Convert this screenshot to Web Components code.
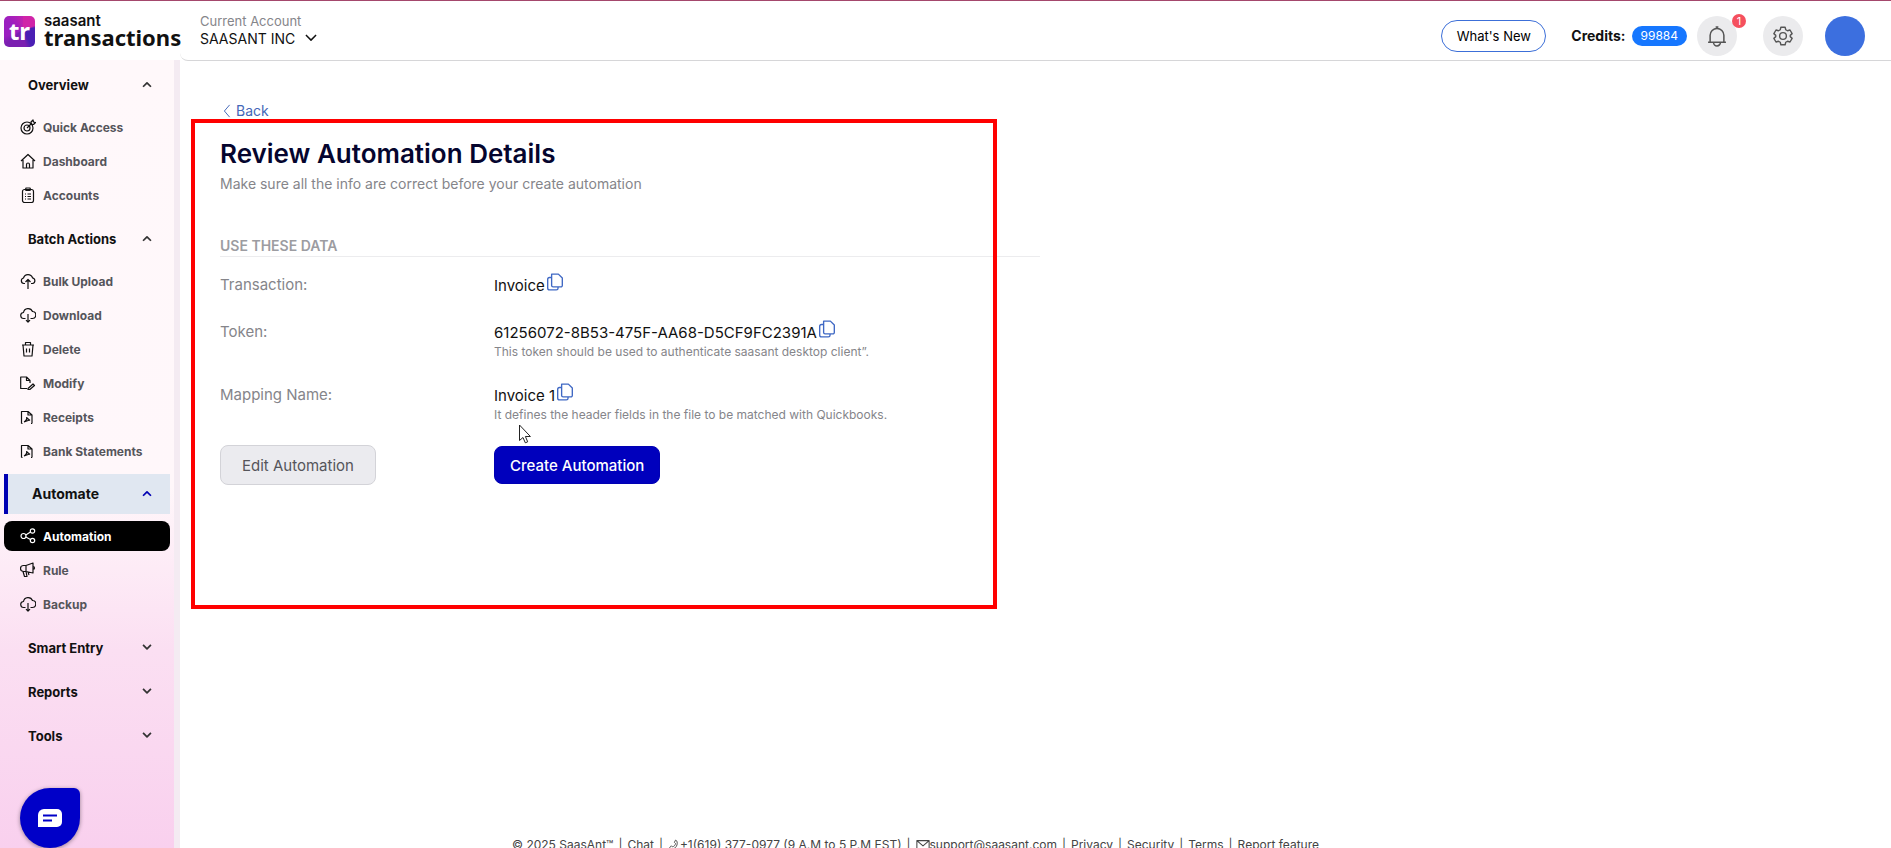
<!DOCTYPE html>
<html lang="en">
<head>
<meta charset="utf-8">
<title>Review Automation Details</title>
<style>
  html, body {
    height: 100%;
  }

  body {
    margin: 0;
    overflow: hidden;
    background: #fff;
    font-family: Inter, "Liberation Sans", Arial, sans-serif;
    color: #111;
  }
</style>
</head>
<body>
<st-app>
  <st-topbar slot="header" account="SAASANT INC" credits="99884" alerts="1"></st-topbar>

  <st-sidebar slot="nav">
    <st-group label="Overview" open>
      <st-link icon="target">Quick Access</st-link>
      <st-link icon="home">Dashboard</st-link>
      <st-link icon="clipboard">Accounts</st-link>
    </st-group>
    <st-group label="Batch Actions" open>
      <st-link icon="cloud-up">Bulk Upload</st-link>
      <st-link icon="cloud-down">Download</st-link>
      <st-link icon="trash">Delete</st-link>
      <st-link icon="modify">Modify</st-link>
      <st-link icon="pdf">Receipts</st-link>
      <st-link icon="pdf">Bank Statements</st-link>
    </st-group>
    <st-group label="Automate" open current>
      <st-link icon="share" active>Automation</st-link>
      <st-link icon="horn">Rule</st-link>
      <st-link icon="cloud-down">Backup</st-link>
    </st-group>
    <st-group label="Smart Entry"></st-group>
    <st-group label="Reports"></st-group>
    <st-group label="Tools"></st-group>
  </st-sidebar>

  <st-review>
    <st-field label="Transaction:" value="Invoice"></st-field>
    <st-field label="Token:" value="61256072-8B53-475F-AA68-D5CF9FC2391A">This token should be used to authenticate saasant desktop client”.</st-field>
    <st-field label="Mapping Name:" value="Invoice 1">It defines the header fields in the file to be matched with Quickbooks.</st-field>
  </st-review>

  <st-footer slot="footer"></st-footer>
</st-app>
<st-chat></st-chat>
<st-pointer></st-pointer>

<script>
// All icons share a 16x16 box and are stroked with the current text colour
const ICONS = {
  target: '<circle cx="7" cy="9" r="6"/><circle cx="7" cy="9" r="3"/><path d="M7 9l5-5M11 5V3l2-2 .5 2 2 .5-2 2h-2"/>',
  home: '<path d="M1 8l7-6.500 7 6.500M3 7v8h10V7M6.500 15v-3.500a1.500 1.500 0 0 1 3 0V15"/>',
  clipboard: '<rect x="2.500" y="2.500" width="11" height="13" rx="2"/><path d="M5.500 2.500l.5-1.500h4l.5 1.500-.5 1H6zM5 7h1M7.500 7H11M5 9.500h1M7.500 9.500H11M5 12h1M7.500 12H11"/>',
  'cloud-up': '<path d="M5 10.500H3.800A2.800 2.800 0 0 1 3.500 5 4.700 4.700 0 0 1 12.500 4.800a2.900 2.900 0 0 1 0 5.700H11M8 16V7M5.500 9L8 6.500 10.500 9"/>',
  'cloud-down': '<path d="M5.500 11.500H4A3 3 0 0 1 3.500 5.500a4.700 4.700 0 0 1 9-1 3.500 3.500 0 0 1-.5 7h-1.500M8 7v8M6 13.200l2 2 2-2"/>',
  trash: '<path d="M2 4h12M3 4l1 11h8l1-11M5.500 4V1.500h5V4M6.500 7.500v4M9.500 7.500v4"/>',
  modify: '<path d="M7 13.500H0.700V2h5.800l3.500 3.500V8M6.500 2v3.500H10M8 13.500l5-4.500 1.500 1.500-4.700 4H8z"/>',
  pdf: '<path d="M1.500 14.500h1M11 14.500h1M1.500 14.500v-12h6.500l4 3.500v8.500M8 2.500V6h4M4 13c2-1 3-3 2.700-5M4 13l5.500-2M7 9l3 2.500"/>',
  share: '<circle cx="3.500" cy="8" r="2.500"/><circle cx="12.500" cy="3" r="2.200"/><circle cx="12.500" cy="12.500" r="2.200"/><path d="M5.800 7l4.700-3M5.800 9l4.700 2.500"/>',
  horn: '<path d="M6 3.500L13 1v10L6 9.500H3.500a3 3 0 0 1 0-6zM6 3.500v6M13 4.500a1.500 1.500 0 0 1 0 3M3 9.500l1.500 5h2.500l-1-5M8 10l1 3"/>',
  copy: '<path d="M5 1h6l3.500 3.500V11a1.300 1.300 0 0 1-1.300 1.300H6.300A1.300 1.300 0 0 1 5 11zM5 4H3.200A1.700 1.700 0 0 0 1.500 5.700v7.600A1.700 1.700 0 0 0 3.200 15h6a1.500 1.500 0 0 0 1.500-1.500v-1.200"/>',
  bell: '<path d="M1.500 12.500h13M3 12.500V7.500a5 5 0 0 1 10 0v5M7 1.500h2M5.500 12.700a2.500 2.500 0 0 0 5 0"/>',
  gear: '<circle cx="8" cy="8" r="2.700"/><path d="M6.300 1h3.400l.5 2 1.400.8 2-.6 1.700 2.900L13.800 7.500v1l1.500 1.400-1.700 2.900-2-.6-1.400.8-.5 2H6.300l-.5-2-1.400-.8-2 .6L.7 9.900l1.500-1.400v-1L.7 6.100l1.700-2.900 2 .6 1.400-.8z"/>',
  up: '<path d="M3.500 10L8 5.500l4.500 4.500"/>',
  down: '<path d="M3.500 4.500L8 9l4.500-4.500"/>',
  left: '<path d="M11 1L5 8l6 7"/>',
  phone: '<path d="M1 13c6 3 13-3 11-10l-2-1.500L8.500 4.500 10 6c0 2-2 4-4 4.500L4.500 9z"/>',
  mail: '<path d="M1 3h14v11H1zM1 3l7 6 7-6"/>'
};

function icon(name, size = 16, width = 1.2) {
  return `<svg width="${size}" height="${size}" viewBox="0 0 16 16" fill="none" stroke="currentColor" stroke-width="${width}" stroke-linejoin="round" aria-hidden="true">${ICONS[name]}</svg>`;
}

class StElement extends HTMLElement {
  constructor() {
    super();
    this.attachShadow({ mode: "open" });
  }

  connectedCallback() {
    this.shadowRoot.innerHTML = this.render();
  }
}

class StApp extends StElement {
  render() {
    return `
      <style>
        :host {
          display: grid;
          grid-template: 60px minmax(0, 1fr) / 180px minmax(0, 1fr);
          height: 100vh;
          box-sizing: border-box;
          overflow: hidden;
        }
        slot[name="header"] { display: block; grid-column: 1 / -1; }
        main { display: flex; flex-direction: column; min-height: 0; }
        .page { flex: 1 0 auto; }
      </style>
      <slot name="header"></slot>
      <slot name="nav"></slot>
      <main>
        <div class="page"><slot></slot></div>
        <slot name="footer"></slot>
      </main>
    `;
  }
}

class StTopbar extends StElement {
  render() {
    return `
      <style>
        :host {
          display: flex;
          align-items: center;
          height: 61px;
          box-sizing: border-box;
          border-top: 1px solid #a4476c;
        }
        .brand { display: flex; align-items: center; gap: 9px; width: 180px; padding-left: 4px; box-sizing: border-box; }
        .mark {
          display: grid;
          place-items: center;
          flex: none;
          width: 31px;
          height: 31px;
          border-radius: 5px;
          background: conic-gradient(from 0deg at 60% 45%, #d024a8 0 70deg, #4a1fb4 80deg 150deg, #7a1fb0 170deg 230deg, #9a1fc0 250deg 300deg, #c022b0 360deg);
          color: #fff;
          font: 700 24px/30px "Noto Sans", sans-serif;
        }
        .name { display: grid; }
        .name small { font-size: 15px; font-weight: 600; line-height: 12px; }
        .name span { font: 700 22px/20px "Noto Sans", sans-serif; }
        .bar {
          flex: 1;
          display: flex;
          align-items: center;
          height: 60px;
          box-sizing: border-box;
          padding-right: 26px;
          border-bottom: 1px solid #d6d6d8;
          border-bottom-left-radius: 8px;
        }
        .account { display: grid; padding: 0 0 2px 20px; }
        .account label { font-size: 13px; line-height: 18px; color: #85858a; }
        .pick { display: flex; align-items: center; gap: 6px; }
        select { appearance: none; border: 0; padding: 0; background: none; font: 14px/18px Inter, sans-serif; color: #111; }
        .tools { display: flex; align-items: center; margin-left: auto; padding-top: 10px; }
        button { font-family: inherit; padding: 0; border: 0; cursor: pointer; }
        .news { width: 105px; height: 32px; border: 1px solid #3c6fd8; border-radius: 16px; background: #fff; font-size: 13px; }
        .credits { display: flex; align-items: center; gap: 6px; margin-left: 25px; font-size: 14px; font-weight: 700; }
        .count { height: 20px; padding: 0 9px; border-radius: 10px; background: #1677ff; color: #fff; font-size: 12px; font-weight: 400; line-height: 20px; }
        .round { display: grid; place-items: center; width: 40px; height: 40px; border-radius: 50%; background: #ebebed; color: #555; }
        .bell { position: relative; margin-left: 10px; }
        .badge { position: absolute; top: -2px; right: -9px; width: 14px; height: 14px; border-radius: 50%; background: #f5505e; color: #fff; font-size: 11px; line-height: 14px; }
        .gear { margin-left: 26px; }
        .avatar { margin-left: 22px; background: #3c6fdf; }
      </style>
      <div class="brand">
        <div class="mark">tr</div>
        <div class="name"><small>saasant</small><span>transactions</span></div>
      </div>
      <div class="bar">
        <div class="account">
          <label for="account">Current Account</label>
          <div class="pick"><select id="account"><option>${this.getAttribute("account")}</option></select>${icon("down", 18, 1.3)}</div>
        </div>
        <div class="tools">
          <button class="news">What's New</button>
          <div class="credits">Credits: <span class="count">${this.getAttribute("credits")}</span></div>
          <button class="round bell" aria-label="Notifications">${icon("bell", 22, 1.1)}<span class="badge">${this.getAttribute("alerts")}</span></button>
          <button class="round gear" aria-label="Settings">${icon("gear", 20, 1.1)}</button>
          <button class="round avatar" aria-label="Profile"></button>
        </div>
      </div>
    `;
  }
}

class StSidebar extends StElement {
  render() {
    return `
      <style>
        :host {
          display: block;
          box-sizing: border-box;
          padding: 3px 4px 0;
          border-right: 6px solid #f4ebf2;
          background: linear-gradient(#fff8fa 0%, #fff7fa 54%, #fbdff2 75%, #f9d0ee 100%);
        }
      </style>
      <nav><slot></slot></nav>
    `;
  }
}

class StGroup extends StElement {
  render() {
    const open = this.hasAttribute("open");
    return `
      <style>
        :host { display: block; }
        button {
          display: flex;
          align-items: center;
          justify-content: space-between;
          width: 100%;
          height: 44px;
          padding: 0 16px 0 24px;
          border: 0;
          background: none;
          color: #111;
          font: 700 13px/20px Inter, sans-serif;
        }
        :host([current]) button {
          height: 40px;
          margin: 1px 0 2px;
          border-left: 4px solid #0000b3;
          background: #e0e7f1;
          font-size: 14px;
        }
        svg { color: #333; }
        :host([current]) svg { color: #0000b3; }
        .items { padding: 3px 0 5px; }
      </style>
      <button aria-expanded="${open}">${this.getAttribute("label")}${icon(open ? "up" : "down", 14, 2)}</button>
      ${open ? '<div class="items"><slot></slot></div>' : ""}
    `;
  }
}

class StLink extends StElement {
  render() {
    return `
      <style>
        :host { display: block; padding: 2px 0; }
        a {
          display: flex;
          align-items: center;
          gap: 7px;
          height: 30px;
          padding-left: 16px;
          border-radius: 8px;
          color: #55555a;
          font-size: 12px;
          font-weight: 700;
          text-decoration: none;
        }
        svg { color: #111; }
        :host([active]) a { background: #000; color: #fff; }
        :host([active]) svg { color: #fff; }
      </style>
      <a href="#">${icon(this.getAttribute("icon"))}<slot></slot></a>
    `;
  }
}

class StReview extends StElement {
  render() {
    return `
      <style>
        :host { display: block; position: relative; padding: 41px 40px 0; }
        /* highlight frame laid over the form */
        .marker {
          position: absolute;
          top: 59px;
          left: 11px;
          width: 806px;
          height: 490px;
          box-sizing: border-box;
          border: 4px solid #f00;
          pointer-events: none;
        }
        .body { max-width: 820px; }
        .back { display: inline-flex; align-items: center; gap: 2px; color: #4467b8; font-size: 14px; line-height: 20px; text-decoration: none; }
        h1 { margin: 15px 0 0; color: #05052e; font-size: 26px; font-weight: 600; line-height: 34px; }
        p { margin: 3px 0 0; color: #85858a; font-size: 14px; line-height: 20px; }
        h2 { margin: 42px 0 0; border-bottom: 1px solid #ececee; color: #9c9ca1; font-size: 14px; font-weight: 600; line-height: 20px; }
        .fields { display: grid; gap: 25px; padding: 18px 0 22px; }
        .actions { display: grid; grid-template-columns: 274px 1fr; align-items: center; justify-items: start; }
        button { height: 40px; padding: 2px 21px 0; border: 1px solid #d3d3d8; border-radius: 8px; background: #ebebef; color: #55555a; font: 15px/20px Inter, sans-serif; }
        .primary { height: 38px; padding: 2px 15px 0; border-color: #0000b3; background: #0000bd; color: #fff; font-weight: 500; }
      </style>
      <div class="body">
        <a class="back" href="#">${icon("left", 14, 1.1)}Back</a>
        <h1>Review Automation Details</h1>
        <p>Make sure all the info are correct before your create automation</p>
        <h2>USE THESE DATA</h2>
        <div class="fields"><slot></slot></div>
        <div class="actions">
          <button>Edit Automation</button>
          <button class="primary">Create Automation</button>
        </div>
      </div>
      <div class="marker"></div>
    `;
  }
}

class StField extends StElement {
  render() {
    return `
      <style>
        :host { display: grid; grid-template-columns: 274px 1fr; }
        .label { color: #85858a; font-size: 15px; line-height: 20px; }
        .value { display: flex; align-items: flex-start; gap: 1px; font-size: 15px; line-height: 22px; }
        button { display: grid; margin-top: -2px; padding: 0; border: 0; background: none; color: #3f68c4; }
        .hint { color: #85858a; font-size: 12px; line-height: 16px; }
      </style>
      <div class="label">${this.getAttribute("label")}</div>
      <div>
        <div class="value">${this.getAttribute("value")}<button aria-label="Copy">${icon("copy", 18, 1.2)}</button></div>
        <div class="hint"><slot></slot></div>
      </div>
    `;
  }
}

class StFooter extends StElement {
  render() {
    return `
      <style>
        :host { display: flex; justify-content: center; gap: 5px; height: 12px; padding-right: 240px; white-space: nowrap; color: #444; font-size: 12px; line-height: 18px; }
        a { display: inline-flex; align-items: center; height: 18px; color: inherit; text-decoration: none; }
      </style>
      <span>© 2025 SaasAnt™</span><span>|</span><a href="#">Chat</a><span>|</span>
      <a href="#">${icon("phone", 12)}+1(619) 377-0977 (9 A.M to 5 P.M EST)</a><span>|</span>
      <a href="#">${icon("mail", 14)}support@saasant.com</a><span>|</span>
      <a href="#">Privacy</a><span>|</span><a href="#">Security</a><span>|</span>
      <a href="#">Terms</a><span>|</span><a href="#">Report feature</a>
    `;
  }
}

class StChat extends StElement {
  render() {
    return `
      <style>
        :host { position: fixed; left: 20px; bottom: 0; }
        button { display: grid; place-items: center; width: 60px; height: 60px; padding: 0; border: 0; border-radius: 30px 6px 30px 30px; background: #0000c8; box-shadow: 0 1px 4px #0006; }
      </style>
      <button aria-label="Chat">
        <svg width="24" height="18" viewBox="0 0 24 18"><path d="M6 0h13a5 5 0 0 1 5 5v8a5 5 0 0 1-5 5H0V6a6 6 0 0 1 6-6z" fill="#fff"/><path d="M5 6.500h14M5 11.500h9" stroke="#0000c8" stroke-width="2"/></svg>
      </button>
    `;
  }
}

class StPointer extends StElement {
  render() {
    return `
      <style>:host { position: fixed; left: 519px; top: 424px; pointer-events: none; }</style>
      <svg width="13" height="20" viewBox="0 0 13 20"><path d="M.5 1v15.500l3.500-3 2.300 5.300 2.400-1-2.300-5.300h5z" fill="#fff" stroke="#222"/></svg>
    `;
  }
}

customElements.define("st-app", StApp);
customElements.define("st-topbar", StTopbar);
customElements.define("st-sidebar", StSidebar);
customElements.define("st-group", StGroup);
customElements.define("st-link", StLink);
customElements.define("st-review", StReview);
customElements.define("st-field", StField);
customElements.define("st-footer", StFooter);
customElements.define("st-chat", StChat);
customElements.define("st-pointer", StPointer);
</script>
</body>
</html>
